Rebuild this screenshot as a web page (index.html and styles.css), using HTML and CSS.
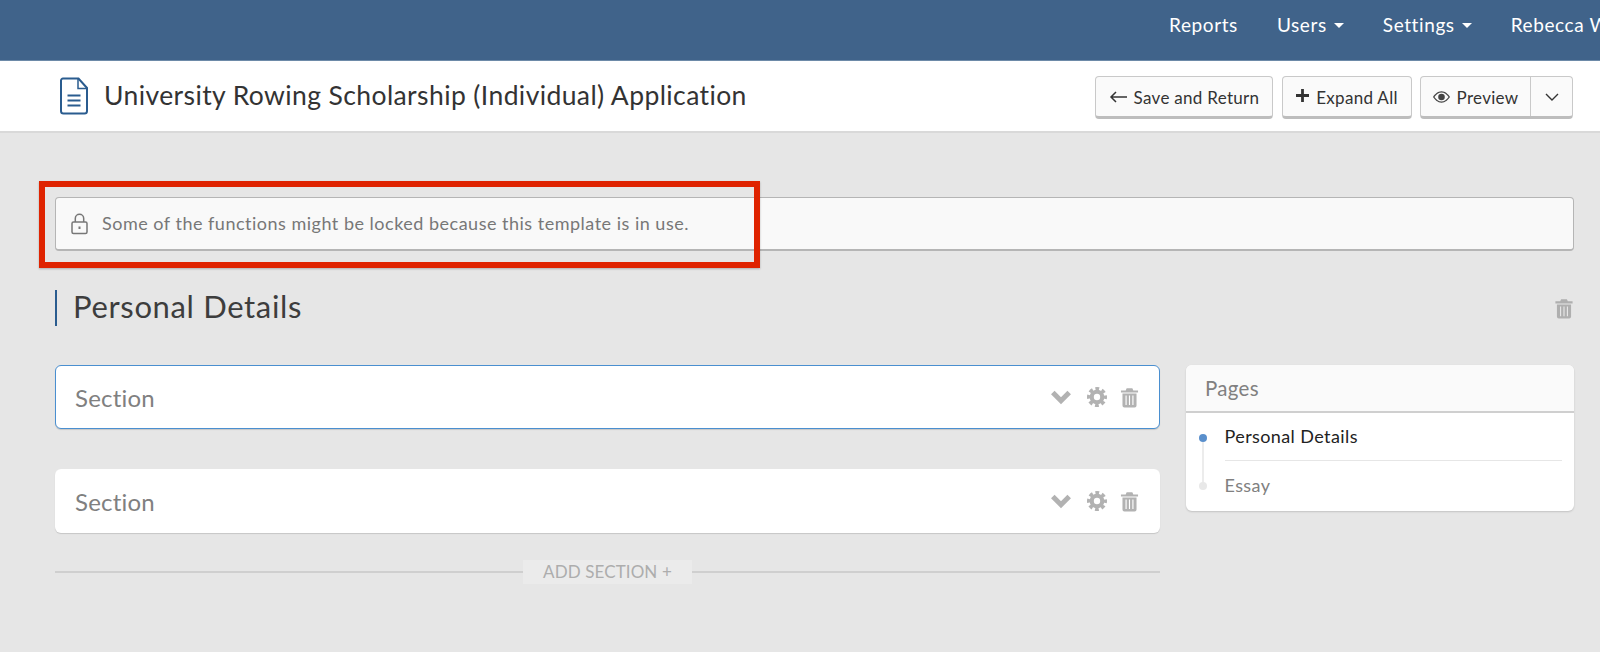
FILE: index.html
```html
<!DOCTYPE html>
<html lang="en">
<head>
<meta charset="utf-8">
<title>University Rowing Scholarship (Individual) Application</title>
<link rel="stylesheet" href="styles.css">
</head>
<body>
<svg class="defs" width="0" height="0" aria-hidden="true">
  <symbol id="trash" viewBox="0 0 20 22">
    <path d="M7 1.200h6l1 2.300h5v2.200H1V3.500h5z" fill="currentColor"/>
    <path fill-rule="evenodd" d="M2.600 6.800h14.800V19.500a2 2 0 0 1-2 2H4.600a2 2 0 0 1-2-2zM5.800 9v10h1.200V9zM9.400 9v10h1.200V9zM13 9v10h1.200V9z" fill="currentColor"/>
  </symbol>
  <symbol id="gear" viewBox="0 0 22 22">
    <circle cx="11" cy="11" r="5.800" fill="none" stroke="currentColor" stroke-width="4.600"/>
    <circle cx="11" cy="11" r="9" fill="none" stroke="currentColor" stroke-width="4" stroke-dasharray="4.070 3"  stroke-dashoffset="2.030"/>
  </symbol>
  <symbol id="chev" viewBox="0 0 22 16">
    <path d="M2.800 3.600 11 11.800l8.200-8.200" fill="none" stroke="currentColor" stroke-width="5"/>
  </symbol>
</svg>

<nav class="topbar">
  <a class="nav-link">Reports</a>
  <a class="nav-link caret">Users</a>
  <a class="nav-link caret">Settings</a>
  <a class="nav-link user">Rebecca Williams</a>
</nav>

<header class="titlebar">
  <svg class="doc-icon" viewBox="0 0 29 38" fill="none" stroke="#2a5c8f" stroke-width="2">
    <path d="M3.500 1.500H19L27.500 11V34a2.500 2.500 0 0 1-2.500 2.500H4A2.500 2.500 0 0 1 1.500 34V3.500a2 2 0 0 1 2-2z"/>
    <path d="M18.500 2v9.500h9" stroke-width="1.500"/>
    <path d="M8 18.500h13M8 23.500h13M8 28.500h13" stroke-width="2.200"/>
  </svg>
  <h1 class="app-title">University Rowing Scholarship (Individual) Application</h1>
  <div class="actions">
    <button class="btn save">
      <svg class="ico-arrow" viewBox="0 0 18 12" fill="none" stroke="#333" stroke-width="1.500"><path d="M18 6H2M7 1 2 6l5 5"/></svg>
      Save and Return
    </button>
    <button class="btn expand">
      <svg class="ico-plus" viewBox="0 0 14 14"><path d="M5.500 0h3v5.500H14v3H8.500V14h-3V8.500H0v-3h5.500z" fill="#333"/></svg>
      Expand All
    </button>
    <div class="btn-group">
      <button class="btn-part preview">
        <svg class="ico-eye" viewBox="0 0 18 12"><path fill-rule="evenodd" d="M9 0c4 0 7 3 9 6-2 3-5 6-9 6S2 9 0 6c2-3 5-6 9-6zm0 1.200C6 1.200 3.500 3.400 1.500 6 3.500 8.600 6 10.800 9 10.800s5.500-2.200 7.500-4.800C14.500 3.400 12 1.200 9 1.200zM9 2.500a3.500 3.500 0 1 1 0 7 3.500 3.500 0 0 1 0-7z" fill="#444"/></svg>
        Preview
      </button>
      <button class="btn-part more" aria-label="More">
        <svg class="ico-down" viewBox="0 0 14 8" fill="none" stroke="#333" stroke-width="1.400"><path d="M1 1l6 6 6-6"/></svg>
      </button>
    </div>
  </div>
</header>

<main class="content">
  <div class="notice">
    <svg class="lock" viewBox="0 0 18 22" fill="none" stroke="#777" stroke-width="1.500">
      <rect x="1.500" y="9" width="15" height="11.500" rx="1.500"/>
      <path d="M4.800 9V5.500a4.200 4.200 0 0 1 8.400 0V9"/>
      <path d="M9 13.500v2.500" stroke-width="2"/>
    </svg>
    <span class="notice-text">Some of the functions might be locked because this template is in use.</span>
    <div class="highlight"></div>
  </div>

  <div class="page-head">
    <h2 class="page-title">Personal Details</h2>
    <svg class="ico-trash-lg"><use href="#trash"/></svg>
  </div>

  <div class="columns">
    <div class="sections">
      <div class="section active">
        <span class="section-name">Section</span>
        <div class="tools">
          <svg class="ico-chev"><use href="#chev"/></svg>
          <svg class="ico-gear"><use href="#gear"/></svg>
          <svg class="ico-trash"><use href="#trash"/></svg>
        </div>
      </div>
      <div class="section">
        <span class="section-name">Section</span>
        <div class="tools">
          <svg class="ico-chev"><use href="#chev"/></svg>
          <svg class="ico-gear"><use href="#gear"/></svg>
          <svg class="ico-trash"><use href="#trash"/></svg>
        </div>
      </div>
      <div class="add-row">
        <span class="add-btn">ADD SECTION +</span>
      </div>
    </div>

    <aside class="pages">
      <div class="pages-head">Pages</div>
      <ul class="pages-list">
        <li class="page-item current">Personal Details</li>
        <li class="page-item">Essay</li>
      </ul>
    </aside>
  </div>
</main>
</body>
</html>
```

FILE: styles.css
```css
* { box-sizing: border-box; }
html, body { height: 100%; }
body {
  margin: 0;
  background: #e6e6e6;
  font-family: Lato, "Open Sans", sans-serif;
  color: #333;
  overflow: hidden;
}
.defs { position: absolute; }

.topbar {
  height: 61px;
  background: #40638a;
  border-bottom: 1px solid #6d8aa8;
  display: flex;
  align-items: center;
  padding-left: 1169px;
  gap: 39px;
  white-space: nowrap;
  overflow: hidden;
  padding-bottom: 11px;
}
.nav-link { color: #fff; font-size: 19px; letter-spacing: .6px; flex: none; }
.nav-link.caret::after {
  content: "";
  display: inline-block;
  margin-left: 7px;
  vertical-align: 4px;
  border-left: 5px solid transparent;
  border-right: 5px solid transparent;
  border-top: 5px solid #fff;
}

.titlebar {
  height: 72px;
  background: #fff;
  border-bottom: 2px solid #d9d9d9;
  display: flex;
  align-items: center;
  padding: 0 27px 0 59px;
}
.doc-icon { width: 30px; height: 38px; flex: none; margin-right: 15px; }
.app-title { margin: 0 0 3px; font-size: 26.500px; letter-spacing: .4px; font-weight: 400; color: #333; flex: 1; white-space: nowrap; }
.actions { display: flex; gap: 8px; margin-top: 2px; }
.btn, .btn-group {
  height: 43px;
  background: #fafafa;
  border: 1px solid #c9c9c9;
  border-bottom: 3px solid #bdbdbd;
  border-radius: 4px;
}
.btn, .btn-part {
  font: 400 17px Lato, sans-serif;
  letter-spacing: .3px;
  color: #333;
  display: flex;
  align-items: center;
  justify-content: center;
  gap: 7px;
  padding: 2px 0 0;
}
.save { width: 178px; margin-right: 1px; }
.expand { width: 130px; }
.btn-group { display: flex; width: 153px; padding: 0; }
.btn-part { background: none; border: 0; height: 100%; }
.preview { width: 110px; border-right: 1px solid #c9c9c9; }
.more { flex: 1; }
.ico-arrow { width: 18px; height: 12px; }
.ico-plus { width: 13px; height: 13px; margin-top: -3px; }
.ico-eye { width: 17px; height: 12px; }
.ico-down { width: 14px; height: 8px; }

.content { padding: 64px 26px 0 55px; }

.notice {
  position: relative;
  height: 54px;
  background: #f9f9f9;
  border: 1px solid #b5b5b5;
  border-bottom-width: 2px;
  border-radius: 4px;
  display: flex;
  align-items: center;
  gap: 13px;
  padding-left: 14px;
  font-size: 18px;
  letter-spacing: .5px;
  color: #777;
}
.notice-text { margin-bottom: 1px; }
.lock { width: 19px; height: 22px; flex: none; }
.highlight {
  position: absolute;
  left: -17px;
  top: -17px;
  width: 721px;
  height: 87px;
  border: 6px solid #df2300;
  box-shadow: 0 1px 2px rgba(0,0,0,.25);
  pointer-events: none;
}

.page-head {
  margin-top: 39px;
  height: 36px;
  display: flex;
  align-items: center;
  justify-content: space-between;
  border-left: 2px solid #2a5c8f;
  padding-left: 16px;
}
.page-title { margin: 0 0 4px; font-size: 31px; letter-spacing: .65px; font-weight: 400; color: #3d3d3d; }
.ico-trash-lg { width: 20px; height: 21px; color: #afafaf; }

.columns { display: flex; gap: 26px; margin-top: 39px; align-items: flex-start; }
.sections { width: 1105px; flex: none; }
.section {
  height: 64px;
  background: #fff;
  border-radius: 6px;
  box-shadow: 0 1px 1px rgba(0,0,0,.14);
  display: flex;
  align-items: center;
  justify-content: space-between;
  padding: 0 20px;
  margin-bottom: 40px;
}
.section.active { border: 1px solid #4a8fd0; padding: 0 19px; }
.section-name { font-size: 24px; letter-spacing: .2px; color: #808080; }
.tools { display: flex; align-items: center; gap: 15px; color: #b2b2b2; }
.ico-chev { width: 22px; height: 16px; }
.ico-gear { width: 20px; height: 20px; }
.ico-trash { width: 19px; height: 21px; margin-left: -2px; margin-right: 1px; }

.add-row {
  position: relative;
  height: 24px;
  margin-top: -13px;
  display: flex;
  justify-content: center;
  align-items: center;
  background: linear-gradient(#cfcfcf, #cfcfcf) center / 100% 2px no-repeat;
}
.add-btn {
  width: 169px;
  height: 24px;
  line-height: 23px;
  text-align: center;
  background: #ebebeb;
  color: #adadad;
  font-size: 17px;
  letter-spacing: .1px;
}

.pages {
  flex: 1;
  height: 146px;
  background: #fff;
  border-radius: 6px;
  box-shadow: 0 1px 2px rgba(0,0,0,.16);
  overflow: hidden;
}
.pages-head {
  height: 48px;
  background: #fafafa;
  border-bottom: 2px solid #cfcfcf;
  display: flex;
  align-items: center;
  padding-left: 19px;
  font-size: 20.500px;
  letter-spacing: .3px;
  color: #808080;
}
.pages-list { list-style: none; margin: 0 12px 0 38.500px; padding: 0; }
.page-item {
  position: relative;
  height: 48px;
  line-height: 46px;
  font-size: 18px;
  letter-spacing: .4px;
  color: #808080;
}
.page-item.current { color: #222; border-bottom: 1px solid #e6e6e6; }
.page-item + .page-item { line-height: 48px; }
.page-item::before {
  content: "";
  position: absolute;
  left: -26px;
  top: 21px;
  width: 8px;
  height: 8px;
  border-radius: 50%;
  background: #e8e8e8;
}
.page-item.current::before { background: #5a8fcc; }
.page-item.current::after {
  content: "";
  position: absolute;
  left: -23px;
  top: 29px;
  width: 2px;
  height: 42px;
  background: #ececec;
}
```
